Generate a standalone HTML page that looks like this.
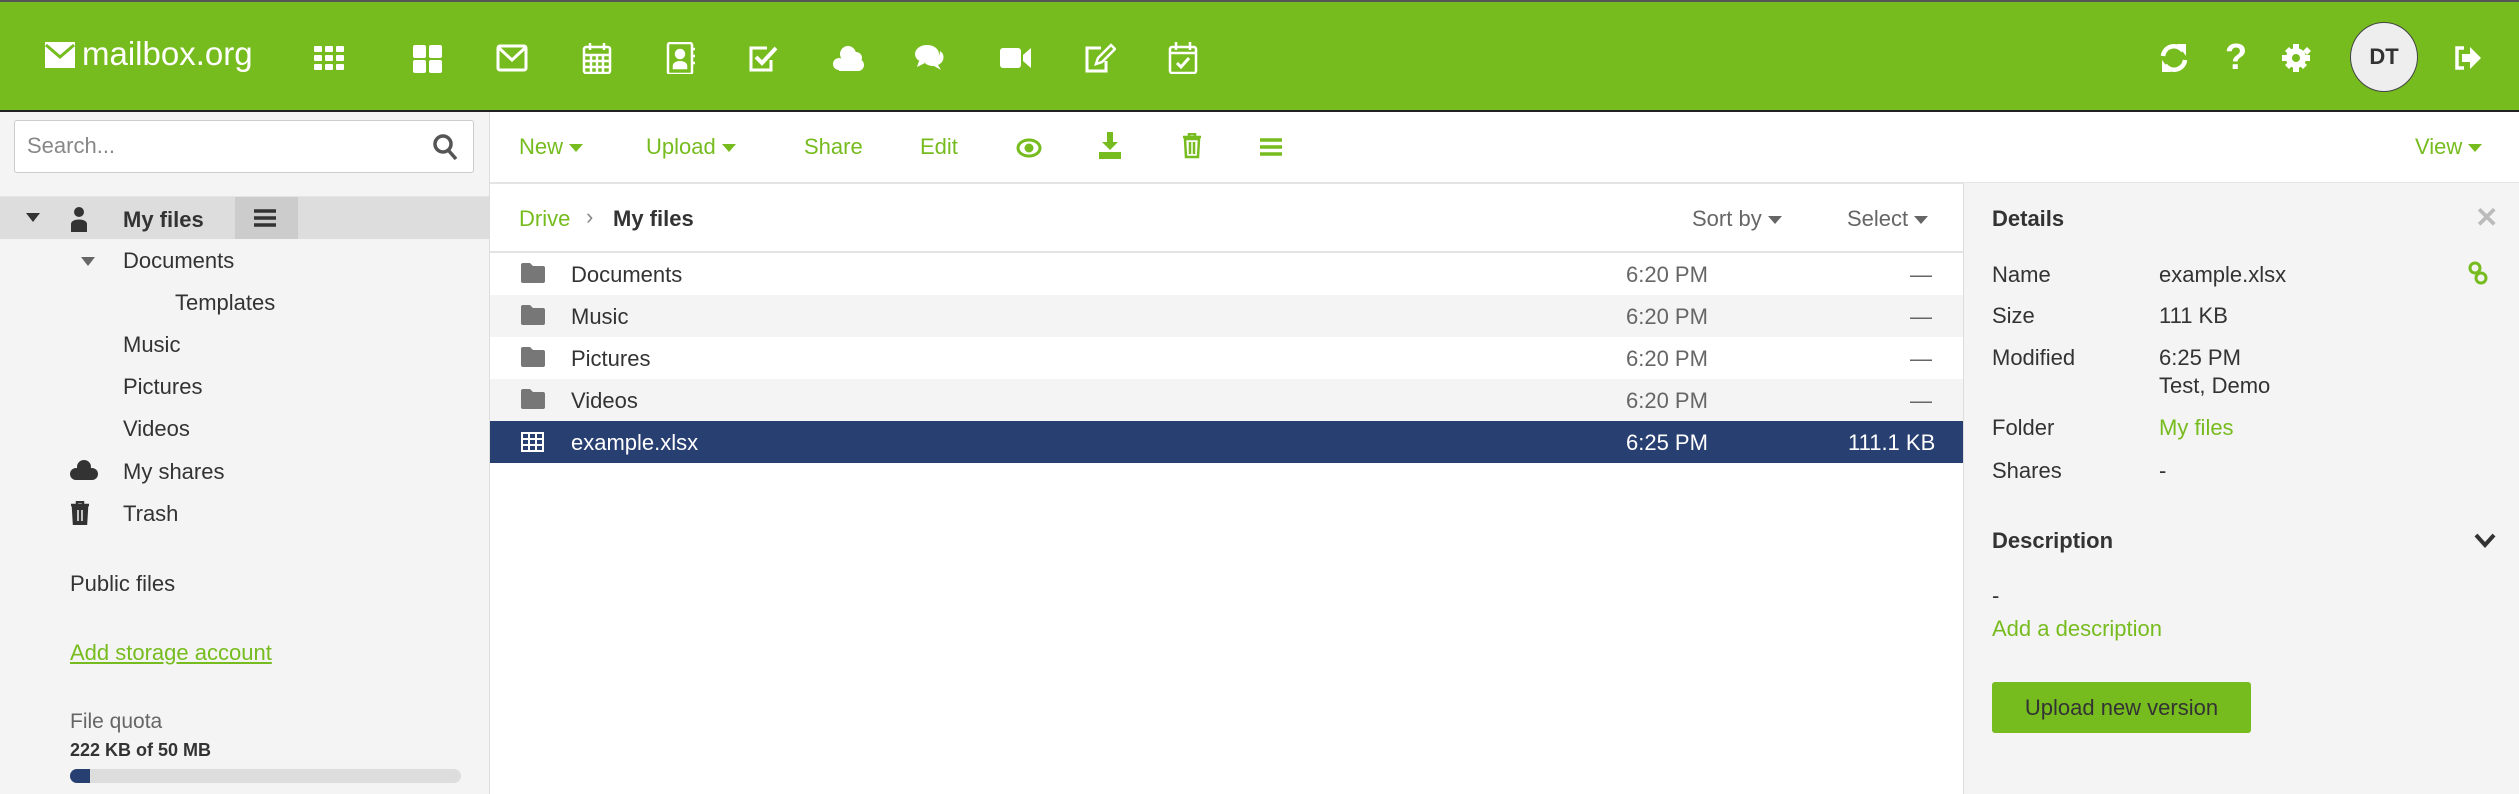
<!DOCTYPE html>
<html><head><meta charset="utf-8"><style>
*{box-sizing:border-box;margin:0;padding:0}
body{width:2519px;height:794px;overflow:hidden;font-family:"Liberation Sans",sans-serif;font-size:22px;color:#333;background:#fff;position:relative}
.a{position:absolute;white-space:nowrap}
.top{position:absolute;left:0;top:0;width:2519px;height:112px;background:#77bc1f;border-top:2px solid #555;border-bottom:2px solid #222}
.ic{position:absolute;top:40px;width:32px;height:32px}
.g{color:#77bc1f}
.row{position:absolute;left:490px;width:1473px;height:42px}
.row span{position:absolute;top:9px}
.side{position:absolute;left:0;top:112px;width:490px;height:682px;background:#f4f4f4;border-right:1px solid #ddd}
.det{position:absolute;left:1963px;top:183px;width:556px;height:611px;background:#f4f4f4;border-left:1px solid #ddd}
.tri{display:inline-block;width:0;height:0;border-left:7px solid transparent;border-right:7px solid transparent;border-top:8px solid currentColor;vertical-align:middle;margin-left:6px}
</style></head><body>
<div class="top">
 <svg class="a" style="left:45px;top:38px" width="30" height="30" viewBox="0 0 30 30"><path d="M0 2h30v26H0z" fill="#fff"/><path d="M1 5l14 12 14-12" stroke="#77bc1f" stroke-width="3" fill="none"/></svg>
 <div class="a" style="left:82px;top:33px;font-size:33px;color:#fff">mailbox.org</div>
 <svg class="ic" style="left:313px" viewBox="0 0 32 32" fill="#fff"><rect x="1" y="4" width="8" height="6" rx="1"/><rect x="12" y="4" width="8" height="6" rx="1"/><rect x="23" y="4" width="8" height="6" rx="1"/><rect x="1" y="13" width="8" height="6" rx="1"/><rect x="12" y="13" width="8" height="6" rx="1"/><rect x="23" y="13" width="8" height="6" rx="1"/><rect x="1" y="22" width="8" height="6" rx="1"/><rect x="12" y="22" width="8" height="6" rx="1"/><rect x="23" y="22" width="8" height="6" rx="1"/></svg>
 <svg class="ic" style="left:412px" viewBox="0 0 32 32" fill="#fff"><rect x="1" y="3" width="13" height="13" rx="2"/><rect x="17" y="3" width="13" height="13" rx="2"/><rect x="1" y="18" width="13" height="13" rx="2"/><rect x="17" y="18" width="13" height="13" rx="2"/></svg>
 <svg class="ic" style="left:496px" viewBox="0 0 32 32" fill="none" stroke="#fff" stroke-width="3"><rect x="2" y="4" width="28" height="24" rx="2"/><path d="M3 6l13 12 13-12"/></svg>
 <svg class="ic" style="left:581px" viewBox="0 0 32 32" fill="none" stroke="#fff" stroke-width="2.5"><rect x="3" y="5" width="26" height="26" rx="2"/><path d="M9 1v7M23 1v7M3 13h26M3 19h26M3 25h26M10 13v18M16 13v18M22 13v18"/></svg>
 <svg class="ic" style="left:664px" viewBox="0 0 32 32" fill="none" stroke="#fff" stroke-width="2.5"><rect x="4" y="1" width="24" height="31" rx="2"/><circle cx="16" cy="12" r="4" fill="#fff"/><path d="M10 24c0-5 12-5 12 0v2H10z" fill="#fff"/><path d="M28 7h3M28 14h3M28 21h3"/></svg>
 <svg class="ic" style="left:747px" viewBox="0 0 32 32" fill="none" stroke="#fff" stroke-width="3"><path d="M24 18v10H4V6h16"/><path d="M9 15l6 6 14-15" stroke-width="4"/></svg>
 <svg class="ic" style="left:832px" viewBox="0 0 32 32" fill="#fff"><circle cx="16" cy="12" r="8"/><circle cx="24" cy="16" r="6"/><circle cx="7" cy="22" r="6"/><circle cx="26" cy="23" r="6"/><rect x="7" y="18" width="19" height="11"/></svg>
 <svg class="ic" style="left:914px" viewBox="0 0 32 32" fill="#fff"><ellipse cx="13" cy="12" rx="12" ry="9"/><path d="M5 19l-2 6 8-4z"/><path d="M26 9c5 3 5 11-2 14l3 5-7-4c-4 0-7-1-9-3 8 0 15-5 15-12z"/></svg>
 <svg class="ic" style="left:1000px" viewBox="0 0 32 32" fill="#fff"><rect x="0" y="6" width="21" height="20" rx="3"/><path d="M23 13l8-7v20l-8-7z"/></svg>
 <svg class="ic" style="left:1084px" viewBox="0 0 32 32" fill="none" stroke="#fff" stroke-width="3"><path d="M22 19v10H3V6h14"/><path d="M12 22l2-6 13-13 4 4-13 13z" fill="none" stroke-width="2.5"/></svg>
 <svg class="ic" style="left:1167px" viewBox="0 0 32 32" fill="none" stroke="#fff" stroke-width="2.5"><rect x="3" y="5" width="26" height="26" rx="2"/><path d="M9 0v8M23 0v8M3 11h26"/><path d="M10 21l4 4 8-9" stroke-width="3"/></svg>
 <svg class="ic" style="left:2158px" viewBox="0 0 32 32" fill="none" stroke="#fff" stroke-width="4.5"><path d="M5 14a11 11 0 0 1 20-5M27 18a11 11 0 0 1-20 5"/><path d="M21 3l6 0 0 8zM11 29l-6 0 0-8z" fill="#fff" stroke-width="2"/></svg>
 <div class="a" style="left:2225px;top:34px;font-size:36px;font-weight:bold;color:#fff">?</div>
 <svg class="ic" style="left:2280px" viewBox="0 0 32 32" fill="#fff"><circle cx="16" cy="16" r="10"/><path d="M13 2h6v6h-6zM13 24h6v6h-6zM2 13h6v6H2zM24 13h6v6h-6zM5 9l4-4 4 4-4 4zM23 9l4-4 4 4-4 4z" transform=""/><path d="M5 23l4-4 4 4-4 4zM19 23l4-4 4 4-4 4z"/><circle cx="16" cy="16" r="4" fill="#77bc1f"/></svg>
 <div class="a" style="left:2350px;top:20px;width:68px;height:70px;border-radius:50%;background:#eee;border:1px solid #444;text-align:center;line-height:68px;font-size:22px;font-weight:bold;color:#333">DT</div>
 <svg class="ic" style="left:2452px" viewBox="0 0 32 32" fill="#fff"><path d="M12 6H5v20h7" fill="none" stroke="#fff" stroke-width="3.5"/><path d="M10 12h8V5l11 11-11 11v-7h-8z"/></svg>
</div>

<div class="side">
 <div class="a" style="left:14px;top:8px;width:460px;height:53px;background:#fff;border:1px solid #ccc;border-radius:3px"></div>
 <div class="a" style="left:27px;top:21px;color:#888">Search...</div>
 <svg class="a" style="left:432px;top:21px" width="26" height="28" viewBox="0 0 26 28" fill="none" stroke="#555" stroke-width="3.5"><circle cx="11" cy="11" r="8"/><path d="M17 18l7 8"/></svg>
 <div class="a" style="left:0;top:84px;width:489px;height:1px;background:#e4e4e4"></div>
 <div class="a" style="left:0;top:85px;width:489px;height:42px;background:#ddd"></div>
 <div class="a" style="left:235px;top:85px;width:63px;height:42px;background:#ccc"></div>
 <svg class="a" style="left:254px;top:97px" width="22" height="18"><path d="M0 2h22M0 9h22M0 16h22" stroke="#333" stroke-width="3.5"/></svg>
 <div class="a" style="left:26px;top:101px;border-left:7px solid transparent;border-right:7px solid transparent;border-top:9px solid #333"></div>
 <svg class="a" style="left:70px;top:94px" width="18" height="26" fill="#333"><circle cx="9" cy="6" r="5"/><path d="M1 26v-8c0-6 16-6 16 0v8z"/></svg>
 <div class="a" style="left:123px;top:95px;font-weight:bold">My files</div>
 <div class="a" style="left:81px;top:145px;border-left:7px solid transparent;border-right:7px solid transparent;border-top:9px solid #666"></div>
 <div class="a" style="left:123px;top:136px">Documents</div>
 <div class="a" style="left:175px;top:178px">Templates</div>
 <div class="a" style="left:123px;top:220px">Music</div>
 <div class="a" style="left:123px;top:262px">Pictures</div>
 <div class="a" style="left:123px;top:304px">Videos</div>
 <svg class="a" style="left:70px;top:347px" width="28" height="22" fill="#333"><circle cx="14" cy="8" r="7"/><circle cx="6" cy="15" r="6"/><circle cx="22" cy="15" r="6"/><rect x="6" y="12" width="16" height="9"/></svg>
 <div class="a" style="left:123px;top:347px">My shares</div>
 <svg class="a" style="left:70px;top:389px" width="20" height="24" fill="none" stroke="#333" stroke-width="2.5"><path d="M1 4h18M7 4V1h6v3"/><path d="M3 6h14l-1 17H4z" fill="#333"/><path d="M8 9v11M12 9v11" stroke="#f4f4f4" stroke-width="1.5"/></svg>
 <div class="a" style="left:123px;top:389px">Trash</div>
 <div class="a" style="left:70px;top:459px">Public files</div>
 <div class="a g" style="left:70px;top:528px;text-decoration:underline">Add storage account</div>
 <div class="a" style="left:70px;top:598px;color:#666;font-size:21px">File quota</div>
 <div class="a" style="left:70px;top:628px;font-weight:bold;font-size:18px">222 KB of 50 MB</div>
 <div class="a" style="left:70px;top:657px;width:391px;height:14px;background:#ddd;border-radius:7px;overflow:hidden"><div style="width:20px;height:14px;background:#283f72"></div></div>
</div>

<div class="a" style="left:490px;top:182px;width:2029px;height:2px;background:#e4e4e4"></div>
<div class="a g" style="left:519px;top:134px">New<span class="tri"></span></div>
<div class="a g" style="left:646px;top:134px">Upload<span class="tri"></span></div>
<div class="a g" style="left:804px;top:134px">Share</div>
<div class="a g" style="left:920px;top:134px">Edit</div>
<svg class="a" style="left:1016px;top:137px" width="26" height="22" fill="none" stroke="#77bc1f" stroke-width="3"><ellipse cx="13" cy="11" rx="11" ry="8"/><circle cx="13" cy="11" r="3" fill="#77bc1f"/></svg>
<svg class="a" style="left:1098px;top:132px" width="24" height="28" fill="#77bc1f"><path d="M9 0h6v10h5l-8 8-8-8h5z"/><rect x="1" y="20" width="22" height="7"/></svg>
<svg class="a" style="left:1182px;top:133px" width="20" height="26" fill="none" stroke="#77bc1f" stroke-width="2.5"><path d="M1 4h18M7 4V1h6v3M3 6h14l-1 18H4zM8 9v12M12 9v12"/></svg>
<svg class="a" style="left:1260px;top:138px" width="22" height="18"><path d="M0 2h22M0 9h22M0 16h22" stroke="#77bc1f" stroke-width="3.5"/></svg>
<div class="a g" style="left:2415px;top:134px">View<span class="tri"></span></div>

<div class="a g" style="left:519px;top:206px">Drive</div>
<div class="a" style="left:586px;top:204px;color:#888">›</div>
<div class="a" style="left:613px;top:206px;font-weight:bold">My files</div>
<div class="a" style="left:1692px;top:206px;color:#666">Sort by<span class="tri"></span></div>
<div class="a" style="left:1847px;top:206px;color:#666">Select<span class="tri"></span></div>
<div class="a" style="left:490px;top:251px;width:1473px;height:2px;background:#e4e4e4"></div>

<div class="row" style="top:253px;background:#fff"><svg class="a" style="left:31px;top:10px" width="24" height="20" fill="#777"><path d="M0 2q0-2 2-2h7l3 3h10q2 0 2 2v13q0 2-2 2H2q-2 0-2-2z"/></svg><span style="left:81px">Documents</span><span style="left:1136px;color:#666">6:20 PM</span><span style="left:1420px;color:#666">—</span></div>
<div class="row" style="top:295px;background:#f4f4f4"><svg class="a" style="left:31px;top:10px" width="24" height="20" fill="#777"><path d="M0 2q0-2 2-2h7l3 3h10q2 0 2 2v13q0 2-2 2H2q-2 0-2-2z"/></svg><span style="left:81px">Music</span><span style="left:1136px;color:#666">6:20 PM</span><span style="left:1420px;color:#666">—</span></div>
<div class="row" style="top:337px;background:#fff"><svg class="a" style="left:31px;top:10px" width="24" height="20" fill="#777"><path d="M0 2q0-2 2-2h7l3 3h10q2 0 2 2v13q0 2-2 2H2q-2 0-2-2z"/></svg><span style="left:81px">Pictures</span><span style="left:1136px;color:#666">6:20 PM</span><span style="left:1420px;color:#666">—</span></div>
<div class="row" style="top:379px;background:#f4f4f4"><svg class="a" style="left:31px;top:10px" width="24" height="20" fill="#777"><path d="M0 2q0-2 2-2h7l3 3h10q2 0 2 2v13q0 2-2 2H2q-2 0-2-2z"/></svg><span style="left:81px">Videos</span><span style="left:1136px;color:#666">6:20 PM</span><span style="left:1420px;color:#666">—</span></div>
<div class="row" style="top:421px;background:#283f72;color:#fff"><svg class="a" style="left:31px;top:11px" width="23" height="20"><rect x="1" y="1" width="21" height="18" fill="none" stroke="#fff" stroke-width="2"/><path d="M1 7h21M1 13h21M8 1v18M15 1v18" stroke="#fff" stroke-width="2"/></svg><span style="left:81px">example.xlsx</span><span style="left:1136px">6:25 PM</span><span style="left:1358px">111.1 KB</span></div>

<div class="det">
 <div class="a" style="left:28px;top:23px;font-weight:bold">Details</div>
 <div class="a" style="left:511px;top:18px;font-size:28px;color:#bbb;font-weight:bold">✕</div>
 <div class="a" style="left:28px;top:79px">Name</div><div class="a" style="left:195px;top:79px">example.xlsx</div>
 <svg class="a" style="left:504px;top:78px" width="20" height="24" fill="none" stroke="#77bc1f" stroke-width="3"><circle cx="7" cy="7" r="5"/><circle cx="13" cy="17" r="5"/></svg>
 <div class="a" style="left:28px;top:120px">Size</div><div class="a" style="left:195px;top:120px">111 KB</div>
 <div class="a" style="left:28px;top:162px">Modified</div><div class="a" style="left:195px;top:162px">6:25 PM</div>
 <div class="a" style="left:195px;top:190px">Test, Demo</div>
 <div class="a" style="left:28px;top:232px">Folder</div><div class="a g" style="left:195px;top:232px">My files</div>
 <div class="a" style="left:28px;top:275px">Shares</div><div class="a" style="left:195px;top:275px">-</div>
 <div class="a" style="left:28px;top:345px;font-weight:bold">Description</div>
 <svg class="a" style="left:510px;top:350px" width="22" height="16" fill="none" stroke="#333" stroke-width="4"><path d="M2 2l9 10 9-10"/></svg>
 <div class="a" style="left:28px;top:400px">-</div>
 <div class="a g" style="left:28px;top:433px">Add a description</div>
 <div class="a" style="left:28px;top:499px;width:259px;height:51px;background:#77bc1f;border-radius:3px;text-align:center;line-height:51px;color:#333">Upload new version</div>
</div>
</body></html>
